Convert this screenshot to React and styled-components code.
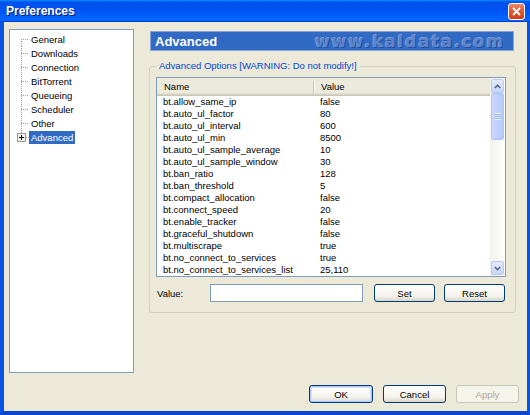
import React, { useState } from "react"
import styled, { createGlobalStyle } from "styled-components"

const GlobalStyle = createGlobalStyle`
  html, body {
    margin: 0;
    padding: 0;
    background: #ECE9D8;
  }
  body {
    font-family: "Liberation Sans", Arial, sans-serif;
    font-size: 9.5px;
    color: #000;
  }
  * { box-sizing: border-box; }
`

const pages = ["General", "Downloads", "Connection", "BitTorrent", "Queueing", "Scheduler", "Other", "Advanced"]

const settings = [
    ["bt.allow_same_ip", "false"],
    ["bt.auto_ul_factor", "80"],
    ["bt.auto_ul_interval", "600"],
    ["bt.auto_ul_min", "8500"],
    ["bt.auto_ul_sample_average", "10"],
    ["bt.auto_ul_sample_window", "30"],
    ["bt.ban_ratio", "128"],
    ["bt.ban_threshold", "5"],
    ["bt.compact_allocation", "false"],
    ["bt.connect_speed", "20"],
    ["bt.enable_tracker", "false"],
    ["bt.graceful_shutdown", "false"],
    ["bt.multiscrape", "true"],
    ["bt.no_connect_to_services", "true"],
    ["bt.no_connect_to_services_list", "25,110"],
]

function Chevron({ down }) {
    return (
        <svg width="7" height="5" viewBox="0 0 7 5">
            <path d={down ? "M0.8 1 L3.5 3.7 L6.2 1" : "M0.8 4 L3.5 1.3 L6.2 4"} fill="none" stroke="#4D6185" strokeWidth="1.6" />
        </svg>
    )
}

function PlusBox() {
    return (
        <svg width="9" height="9" viewBox="0 0 9 9">
            <rect x="0.5" y="0.5" width="8" height="8" fill="#F2F0E8" stroke="#919B9C" />
            <path d="M2 4.5 H7 M4.5 2 V7" stroke="#000" strokeWidth="1" />
        </svg>
    )
}

export default function App() {
    const [selected, setSelected] = useState("Advanced")
    const [value, setValue] = useState("")

    return (
        <>
            <GlobalStyle />
            <Window>
                <TitleBar>
                    <Title>Preferences</Title>
                    <CloseButton>
                        <svg width="9" height="9" viewBox="0 0 9 9">
                            <path d="M1 1 L8 8 M8 1 L1 8" stroke="#fff" strokeWidth="1.8" />
                        </svg>
                    </CloseButton>
                </TitleBar>
                <Frame>
                    <Main>
                        <Tree>
                            {pages.map((p, i) => (
                                <TreeRow key={p} onClick={() => setSelected(p)}>
                                    <Gutter $kind={i === 0 ? "first" : p === "Advanced" ? "plus" : "mid"}>
                                        {p === "Advanced" && <PlusBox />}
                                    </Gutter>
                                    <TreeLabel $active={selected === p}>{p}</TreeLabel>
                                </TreeRow>
                            ))}
                        </Tree>
                        <RightPane>
                            <HeaderBar>
                                <HeaderTitle>Advanced</HeaderTitle>
                                <Watermark>www.kaldata.com</Watermark>
                            </HeaderBar>
                            <Group>
                                <Legend>Advanced Options [WARNING: Do not modify!]</Legend>
                                <List>
                                    <ListMain>
                                        <ListHeader>
                                            <HeaderCell $first>Name</HeaderCell>
                                            <HeaderCell>Value</HeaderCell>
                                        </ListHeader>
                                        <Rows>
                                            {settings.map(([name, val]) => (
                                                <Row key={name}>
                                                    <Cell>{name}</Cell>
                                                    <Cell>{val}</Cell>
                                                </Row>
                                            ))}
                                        </Rows>
                                    </ListMain>
                                    <ScrollBar>
                                        <ScrollButton><Chevron /></ScrollButton>
                                        <Thumb><Grip /></Thumb>
                                        <Track />
                                        <ScrollButton><Chevron down /></ScrollButton>
                                    </ScrollBar>
                                </List>
                                <ValueRow>
                                    <ValueLabel>Value:</ValueLabel>
                                    <ValueInput value={value} onChange={e => setValue(e.target.value)} />
                                    <Button $width={61} $left={11}>Set</Button>
                                    <Button $width={61} $left={9}>Reset</Button>
                                </ValueRow>
                            </Group>
                        </RightPane>
                    </Main>
                    <Footer>
                        <Button $width={64} $default>OK</Button>
                        <Button $width={63}>Cancel</Button>
                        <Button $width={63} disabled>Apply</Button>
                    </Footer>
                </Frame>
            </Window>
        </>
    )
}

const Window = styled.div`
    width: 530px;
    height: 415px;
    display: flex;
    flex-direction: column;
    background: #0054E3;
    overflow: hidden;
`
const TitleBar = styled.div`
    height: 22px;
    flex-shrink: 0;
    display: flex;
    align-items: center;
    justify-content: space-between;
    padding: 0 5px 0 6px;
    background: linear-gradient(180deg, #0997FF, #0053EE 8%, #0050EE 40%, #0066FF 88%, #0066FF 93%, #005BFF 95%, #003DD7 96%, #003DD7);
`
const Title = styled.span`
    color: #fff;
    font-weight: bold;
    font-size: 12px;
    text-shadow: 1px 1px 0 #0A1883;
`
const CloseButton = styled.div`
    width: 17px;
    height: 17px;
    border: 1px solid #fff;
    border-radius: 3px;
    background: linear-gradient(180deg, #EC8A6A, #DF5A36 45%, #CF3D1B);
    display: flex;
    align-items: center;
    justify-content: center;
`
const Frame = styled.div`
    flex: 1;
    display: flex;
    flex-direction: column;
    background: #ECE9D8;
    border-left: 4px solid #0A52E2;
    border-right: 3px solid #0A52E2;
    border-bottom: 4px solid #0A46D0;
`
const Main = styled.div`
    flex: 1;
    display: flex;
    gap: 15px;
    padding: 7px 11px 0 5px;
`
const Tree = styled.div`
    width: 125px;
    height: 344px;
    flex-shrink: 0;
    border: 1px solid #7F9DB9;
    background: #fff;
    padding: 2px 0 0 7px;
`
const TreeRow = styled.div`
    display: flex;
    align-items: center;
    height: 14px;
    cursor: default;
`
const Gutter = styled.span`
    width: 12px;
    height: 14px;
    flex-shrink: 0;
    display: flex;
    align-items: center;
    background-image:
        repeating-linear-gradient(to bottom, #A0A0A0 0 1px, transparent 1px 2px),
        repeating-linear-gradient(to right, #A0A0A0 0 1px, transparent 1px 2px);
    background-repeat: no-repeat;
    background-size: ${p => p.$kind === "first" ? "1px 7px" : p.$kind === "plus" ? "1px 3px" : "1px 14px"}, ${p => p.$kind === "plus" ? "3px 1px" : "8px 1px"};
    background-position: ${p => p.$kind === "first" ? "4px 7px" : "4px 0"}, ${p => p.$kind === "plus" ? "9px 7px" : "4px 7px"};
`
const TreeLabel = styled.span`
    height: 13px;
    line-height: 13px;
    padding: 0 2px;
    background: ${p => p.$active ? "#316AC5" : "transparent"};
    color: ${p => p.$active ? "#fff" : "#000"};
`
const RightPane = styled.div`
    flex: 1;
    display: flex;
    flex-direction: column;
    padding-top: 2px;
`
const HeaderBar = styled.div`
    height: 20px;
    margin: 0 2px 0 1px;
    display: flex;
    align-items: center;
    justify-content: space-between;
    padding: 0 8px 0 4px;
    background: #316AC5;
    border: 1px solid #8AA6D8;
`
const HeaderTitle = styled.span`
    color: #fff;
    font-weight: bold;
    font-size: 13px;
`
const Watermark = styled.span`
    font-family: "DejaVu Sans", "Liberation Sans", sans-serif;
    font-weight: bold;
    font-size: 16px;
    letter-spacing: 2px;
    color: #5A84CC;
    text-shadow: 1px 1px 0 #22509F, -1px 0 0 #7E9CD2, 0 -1px 0 #7E9CD2;
    margin-top: 1px;
`
const Group = styled.fieldset`
    margin: 9px 0 0 0;
    padding: 5px 9px 10px 6px;
    border: 1px solid #D0D0BF;
    border-radius: 3px;
    min-width: 0;
`
const Legend = styled.legend`
    padding: 0 3px;
    color: #0046D5;
    font-size: 9.5px;
    line-height: 12px;
`
const List = styled.div`
    height: 200px;
    display: flex;
    border: 1px solid #7F9DB9;
    background: #fff;
`
const ListMain = styled.div`
    flex: 1;
    display: flex;
    flex-direction: column;
    overflow: hidden;
`
const ListHeader = styled.div`
    height: 18px;
    flex-shrink: 0;
    display: grid;
    grid-template-columns: 157px 1fr;
    background: #EBEADB;
    box-shadow: inset 0 -1px 0 #CBC7B8, inset 0 -2px 0 #D6D2C2, inset 0 -3px 0 #E2DECD;
`
const HeaderCell = styled.div`
    display: flex;
    align-items: center;
    padding: 0 0 2px 7px;
    border-right: ${p => p.$first ? "1px solid #C7C5B2" : "none"};
    box-shadow: ${p => p.$first ? "1px 0 0 #fff" : "none"};
    margin: ${p => p.$first ? "3px 0" : "0"};
`
const Rows = styled.div`
    flex: 1;
    overflow: hidden;
`
const Row = styled.div`
    display: grid;
    grid-template-columns: 157px 1fr;
    height: 12px;
    line-height: 12px;
    white-space: nowrap;
`
const Cell = styled.div`
    padding-left: 6px;
    overflow: hidden;
`
const ScrollBar = styled.div`
    width: 15px;
    flex-shrink: 0;
    display: flex;
    flex-direction: column;
    background: linear-gradient(90deg, #F3F1EC, #FEFEFB);
    padding: 1px 0;
`
const ScrollButton = styled.div`
    height: 14px;
    margin: 0 1px;
    border: 1px solid #B7CAF5;
    border-radius: 2px;
    background: linear-gradient(180deg, #E3EBFD, #C6D6FB);
    display: flex;
    align-items: center;
    justify-content: center;
`
const Thumb = styled.div`
    height: 47px;
    margin: 0 1px;
    border: 1px solid #B1C6F4;
    border-radius: 2px;
    background: linear-gradient(90deg, #C9D8FC, #BCCFFA 60%, #B4C9F7);
    display: flex;
    align-items: center;
    justify-content: center;
`
const Grip = styled.div`
    width: 6px;
    height: 7px;
    background: repeating-linear-gradient(to bottom, #EEF3FE 0 1px, #8CB0F8 1px 2px);
`
const Track = styled.div`
    flex: 1;
`
const ValueRow = styled.div`
    display: flex;
    align-items: center;
    height: 18px;
    margin-top: 7px;
`
const ValueLabel = styled.span`
    width: 54px;
    padding-left: 1px;
    flex-shrink: 0;
`
const ValueInput = styled.input`
    width: 153px;
    height: 18px;
    border: 1px solid #7F9DB9;
    background: #fff;
    font: inherit;
    padding: 0 3px;
    outline: none;
`
const Button = styled.button`
    width: ${p => p.$width}px;
    height: 18px;
    margin-left: ${p => p.$left || 0}px;
    font-family: inherit;
    font-size: 9.5px;
    color: #000;
    padding: 0;
    border: 1px solid #003C74;
    border-radius: 3px;
    background: linear-gradient(180deg, #FFFFFF, #F3F2EC 70%, #D9D4C9);
    box-shadow: ${p => p.$default ? "inset 0 0 0 1px #AFC7F2, inset 0 0 0 2px #D4E2FB" : "none"};

    &:disabled {
        color: #ACA899;
        border-color: #C9C7BA;
        background: #F5F4EA;
    }
`
const Footer = styled.div`
    flex-shrink: 0;
    display: flex;
    justify-content: flex-end;
    gap: 10px;
    padding: 0 8px 8px 0;
`
